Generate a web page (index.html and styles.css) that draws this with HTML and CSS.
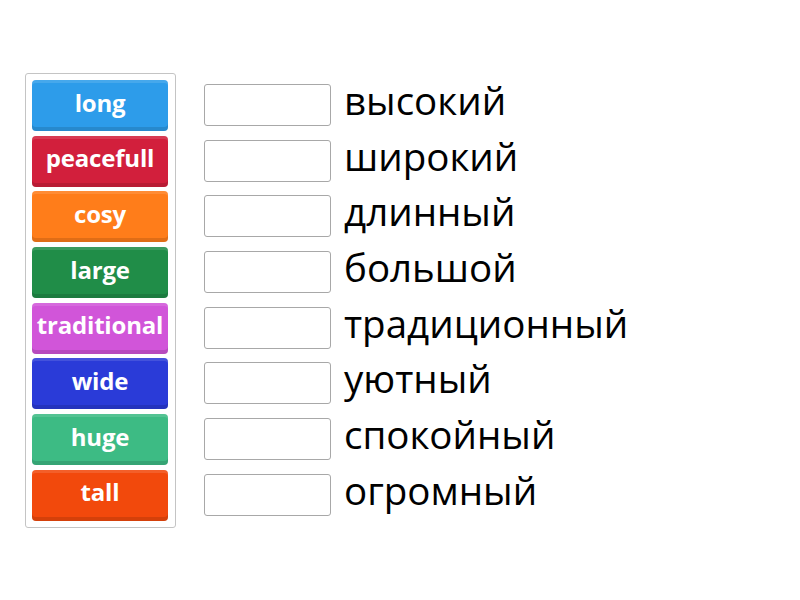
FILE: index.html
```html
<!DOCTYPE html>
<html>
<head>
<meta charset="utf-8">
<link rel="stylesheet" href="styles.css">
</head>
<body>
<div class="page">
  <div class="bank">
    <div class="tile c1">long</div>
    <div class="tile c2">peacefull</div>
    <div class="tile c3">cosy</div>
    <div class="tile c4">large</div>
    <div class="tile c5">traditional</div>
    <div class="tile c6">wide</div>
    <div class="tile c7">huge</div>
    <div class="tile c8">tall</div>
  </div>
  <div class="targets">
    <div class="row"><div class="slot"></div><span class="word">высокий</span></div>
    <div class="row"><div class="slot"></div><span class="word">широкий</span></div>
    <div class="row"><div class="slot"></div><span class="word">длинный</span></div>
    <div class="row"><div class="slot"></div><span class="word">большой</span></div>
    <div class="row"><div class="slot"></div><span class="word">традиционный</span></div>
    <div class="row"><div class="slot"></div><span class="word">уютный</span></div>
    <div class="row"><div class="slot"></div><span class="word">спокойный</span></div>
    <div class="row"><div class="slot"></div><span class="word">огромный</span></div>
  </div>
</div>
</body>
</html>
```
FILE: styles.css
```css
html, body {
  margin: 0;
  padding: 0;
  background: #fff;
  font-family: "Open Sans", "Liberation Sans", sans-serif;
}
.page {
  display: flex;
  align-items: flex-start;
  padding: 73px 0 0 25px;
}
.bank {
  border: 1px solid #c4c4c4;
  border-radius: 3px;
  padding: 6px 7px 1px 6px;
  width: 136px;
}
.tile {
  height: 51px;
  margin-bottom: 4.7px;
  border-radius: 4px;
  box-sizing: border-box;
  color: #fff;
  font-weight: 700;
  font-size: 24px;
  display: flex;
  align-items: center;
  justify-content: center;
  padding-bottom: 7px;
  box-shadow: inset 0 -4px 0 rgba(0,0,0,0.12), inset 0 3px 0 rgba(255,255,255,0.12);
  white-space: nowrap;
  letter-spacing: -0.2px;
}
.c1 { background: #2d9cea; }
.c2 { background: #d21f3c; }
.c3 { background: #ff7d1a; }
.c4 { background: #208d48; }
.c5 { background: #d155d9; }
.c6 { background: #2a3bd8; }
.c7 { background: #3dbb84; }
.c8 { background: #f2490c; }
.targets {
  margin-left: 28px;
  padding-top: 7px;
}
.row {
  height: 55.7px;
  display: flex;
  align-items: flex-start;
}
.slot {
  width: 127px;
  height: 42px;
  box-sizing: border-box;
  border: 1px solid #a8a8a8;
  border-radius: 3px;
  margin-top: 4px;
  background: #fff;
}
.word {
  margin-left: 13px;
  font-size: 38.5px;
  line-height: 44px;
  color: #000;
  margin-top: -2px;
}
```
